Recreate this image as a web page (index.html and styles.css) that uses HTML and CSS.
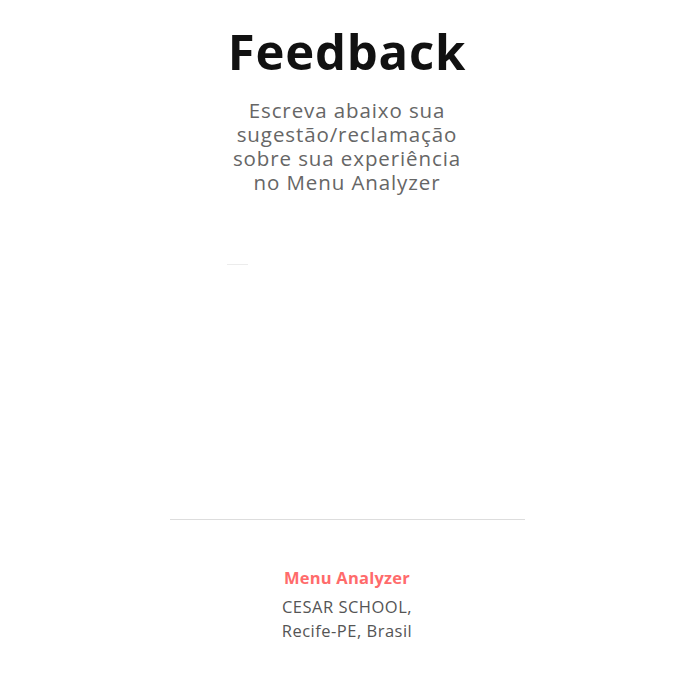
FILE: index.html
```html
<!DOCTYPE html>
<html lang="pt-BR">
<head>
<meta charset="utf-8">
<title>Feedback</title>
<link rel="stylesheet" href="styles.css">
</head>
<body>
<main class="page">
  <section class="feedback">
    <h1 class="title">Feedback</h1>
    <p class="subtitle">Escreva abaixo sua sugestão/reclamação sobre sua experiência no Menu Analyzer</p>
    <div class="form-area">
      <span class="field"></span>
    </div>
  </section>
  <hr class="divider">
  <footer class="footer">
    <p class="brand">Menu Analyzer</p>
    <p class="address">CESAR SCHOOL,<br>Recife-PE, Brasil</p>
  </footer>
</main>
</body>
</html>
```
FILE: styles.css
```css
html, body {
  margin: 0;
  padding: 0;
  background: #fff;
}
body {
  font-family: "Open Sans", "Noto Sans", sans-serif;
  padding-right: 6px;
}
.page {
  width: 355px;
  margin: 0 auto;
  display: flex;
  flex-direction: column;
  align-items: stretch;
}
.feedback {
  display: flex;
  flex-direction: column;
  align-items: center;
  padding-top: 23px;
}
.title {
  margin: 0;
  font-family: "Open Sans", sans-serif;
  font-weight: 700;
  font-size: 49px;
  line-height: 56px;
  color: #111;
  letter-spacing: 0.8px;
}
.subtitle {
  margin: 19px 0 0;
  width: 234px;
  text-align: center;
  font-size: 20.5px;
  line-height: 24px;
  color: #666;
  font-weight: 400;
  letter-spacing: 0.9px;
}
.form-area {
  height: 325px;
  align-self: stretch;
  padding-top: 70px;
  box-sizing: border-box;
  padding-left: 57px;
}
.field {
  display: block;
  width: 21px;
  height: 1px;
  background: #ececec;
}
.divider {
  margin: 0;
  border: 0;
  height: 1px;
  background: #ddd;
}
.footer {
  display: flex;
  flex-direction: column;
  align-items: center;
  padding-top: 46px;
}
.brand {
  margin: 0;
  font-weight: 700;
  font-size: 16.5px;
  line-height: 24px;
  color: #ff6b6b;
  letter-spacing: 0.2px;
}
.address {
  margin: 5px 0 0;
  text-align: center;
  font-size: 16.5px;
  line-height: 24px;
  color: #555;
  letter-spacing: 0.5px;
}
```
